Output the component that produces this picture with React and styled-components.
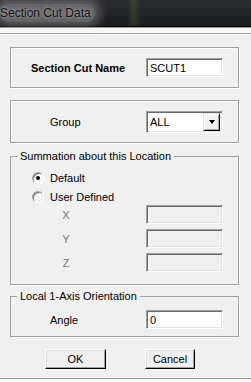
import React from "react";
import styled, { createGlobalStyle } from "styled-components";

const GlobalStyle = createGlobalStyle`
  html, body {
    margin: 0;
    padding: 0;
    background: #f0f0f0;
  }
  body {
    font-family: "Liberation Sans", Arial, sans-serif;
    font-size: 11px;
    color: #000;
  }
`;

const Window = styled.div`
  width: 251px;
  height: 382px;
  display: flex;
  flex-direction: column;
  background: #f0f0f0;
  overflow: hidden;
`;

const TitleBar = styled.div`
  height: 26px;
  flex-shrink: 0;
  display: flex;
  align-items: center;
  border-bottom: 1px solid #050505;
  background:
    linear-gradient(90deg, rgba(0,0,0,0) 128px, rgba(90,100,60,0.35) 133px, rgba(0,0,0,0) 140px),
    linear-gradient(180deg, #2b2c30 0%, #222327 60%, #1b1c1f 100%);
`;

const Title = styled.span`
  font-family: "Liberation Sans", Arial, sans-serif;
  font-size: 12px;
  color: #121212;
  padding: 2px 4px 2px 0;
  margin-top: -1px;
  border-radius: 8px;
  background: rgba(150, 150, 150, 0.55);
  box-shadow: 0 0 8px 5px rgba(150, 150, 150, 0.5);
  text-shadow: 0 0 4px rgba(255, 255, 255, 0.7);
`;

const Strip = styled.div`
  height: 5px;
  flex-shrink: 0;
  background: #f6f6f6;
  border-top: 1px solid #9b9b9b;
  border-bottom: 1px solid #a0a0a0;
`;

const Body = styled.div`
  display: flex;
  flex-direction: column;
  padding: 12px 12px 0 10px;
  border-top: 1px solid #ffffff;
  flex: 1;
`;

const Panel = styled.div`
  height: ${(p) => p.$h}px;
  box-sizing: border-box;
  border: 1px solid #a0a0a0;
  box-shadow: 1px 1px 0 #ffffff, inset 1px 1px 0 #ffffff;
  display: flex;
  align-items: center;
  margin-bottom: 12px;
`;

const Group = styled.fieldset`
  margin: ${(p) => p.$mt}px 0 0 0;
  padding: 0 0 ${(p) => p.$pb}px 0;
  min-inline-size: 0;
  border: 1px solid #a0a0a0;
  box-shadow: 1px 1px 0 #ffffff;
`;

const Legend = styled.legend`
  margin-left: 6px;
  padding: 0 3px;
  line-height: 13px;
  font-size: 11px;
  color: #000;
`;

const Row = styled.div`
  display: flex;
  align-items: center;
  width: 100%;
  height: ${(p) => p.$h || 19}px;
`;

const Label = styled.span`
  margin-left: ${(p) => p.$indent}px;
  font-weight: ${(p) => (p.$bold ? 700 : 400)};
  white-space: nowrap;
`;

const AxisLabel = styled.span`
  margin-left: 45px;
  width: 20px;
  text-align: center;
  color: #7a7a7a;
`;

const TextBox = styled.div`
  margin-left: auto;
  margin-right: 15px;
  width: 77px;
  height: 19px;
  box-sizing: border-box;
  border-style: solid;
  border-width: 1px;
  border-color: #a0a0a0 #ffffff #ffffff #a0a0a0;
  box-shadow: inset 1px 1px 0 #696969, inset -1px -1px 0 #e3e3e3;
  background: ${(p) => (p.$disabled ? "#f0f0f0" : "#ffffff")};
  padding: 2px 0 0 3px;
  line-height: 14px;
  font-size: 11px;
`;

const Combo = styled.div`
  margin-left: auto;
  margin-right: 15px;
  width: 77px;
  height: 22px;
  box-sizing: border-box;
  border-style: solid;
  border-width: 1px;
  border-color: #a0a0a0 #ffffff #ffffff #a0a0a0;
  box-shadow: inset 1px 1px 0 #696969, inset -1px -1px 0 #e3e3e3;
  background: #ffffff;
  display: flex;
  align-items: center;
  padding: 0 2px 0 2px;
`;

const ComboText = styled.span`
  flex: 1;
  padding-left: 1px;
`;

const ComboButton = styled.div`
  width: 17px;
  height: 18px;
  box-sizing: border-box;
  background: #f0f0f0;
  border-style: solid;
  border-width: 1px;
  border-color: #e3e3e3 #000000 #000000 #e3e3e3;
  box-shadow: inset 1px 1px 0 #ffffff, inset -1px -1px 0 #a0a0a0;
  display: flex;
  align-items: center;
  justify-content: center;
`;

const Arrow = styled.div`
  width: 0;
  height: 0;
  border-left: 3.5px solid transparent;
  border-right: 3.5px solid transparent;
  border-top: 4px solid #000;
  margin-top: 1px;
`;

const GroupContent = styled.div`
  display: flex;
  flex-direction: column;
  padding-top: ${(p) => p.$pt}px;
`;

const RadioRow = styled.label`
  display: flex;
  align-items: center;
  height: 13px;
  margin: 0 0 6px 21px;
`;

const RadioCircle = styled.span`
  width: 12px;
  height: 12px;
  box-sizing: border-box;
  border-radius: 50%;
  border: 1px solid;
  border-color: #a0a0a0 #ffffff #ffffff #a0a0a0;
  box-shadow: inset 1px 1px 0 #696969, inset -1px -1px 0 #e3e3e3;
  background: #ffffff;
  display: flex;
  align-items: center;
  justify-content: center;
  margin-right: 6px;
  &::after {
    content: "";
    width: 4px;
    height: 4px;
    border-radius: 50%;
    background: ${(p) => (p.$checked ? "#000" : "transparent")};
  }
`;

const CoordList = styled.div`
  display: flex;
  flex-direction: column;
  gap: 5px;
  margin-top: -4px;
`;

const ButtonRow = styled.div`
  display: flex;
  margin-top: 12px;
  height: 20px;
`;

const Button = styled.button`
  width: ${(p) => p.$w}px;
  height: 20px;
  margin-left: ${(p) => p.$ml}px;
  padding: 0;
  box-sizing: border-box;
  font-family: "Liberation Sans", Arial, sans-serif;
  font-size: 11px;
  color: #000;
  background: #f0f0f0;
  border-style: solid;
  border-width: 1px;
  border-color: ${(p) =>
    p.$default ? "#ffffff #000000 #000000 #ffffff" : "#ffffff #000000 #000000 #ffffff"};
  box-shadow: inset -1px -1px 0 #a0a0a0, inset 1px 1px 0 #e3e3e3;
`;

const BottomEdge = styled.div`
  margin-top: auto;
  height: 3px;
  border-top: 1px solid #a0a0a0;
  background: #ffffff;
`;

export default function App() {
  return (
    <>
      <GlobalStyle />
      <Window>
        <TitleBar>
          <Title>Section Cut Data</Title>
        </TitleBar>
        <Strip />
        <Body>
          <Panel $h={41}>
            <Row>
              <Label $indent={20} $bold>Section Cut Name</Label>
              <TextBox>SCUT1</TextBox>
            </Row>
          </Panel>
          <Panel $h={43}>
            <Row $h={22}>
              <Label $indent={39}>Group</Label>
              <Combo>
                <ComboText>ALL</ComboText>
                <ComboButton>
                  <Arrow />
                </ComboButton>
              </Combo>
            </Row>
          </Panel>
          <Group $mt={-5} $pb={12}>
            <Legend>Summation about this Location</Legend>
            <GroupContent $pt={8}>
              <RadioRow>
                <RadioCircle $checked />
                Default
              </RadioRow>
              <RadioRow>
                <RadioCircle />
                User Defined
              </RadioRow>
              <CoordList>
                {["X", "Y", "Z"].map((axis) => (
                  <Row key={axis}>
                    <AxisLabel>{axis}</AxisLabel>
                    <TextBox $disabled />
                  </Row>
                ))}
              </CoordList>
            </GroupContent>
          </Group>
          <Group $mt={5} $pb={7}>
            <Legend>Local 1-Axis Orientation</Legend>
            <GroupContent $pt={7}>
              <Row>
                <Label $indent={39}>Angle</Label>
                <TextBox>0</TextBox>
              </Row>
            </GroupContent>
          </Group>
          <ButtonRow>
            <Button $w={61} $ml={35} $default>OK</Button>
            <Button $w={50} $ml={39}>Cancel</Button>
          </ButtonRow>
        </Body>
        <BottomEdge />
      </Window>
    </>
  );
}
